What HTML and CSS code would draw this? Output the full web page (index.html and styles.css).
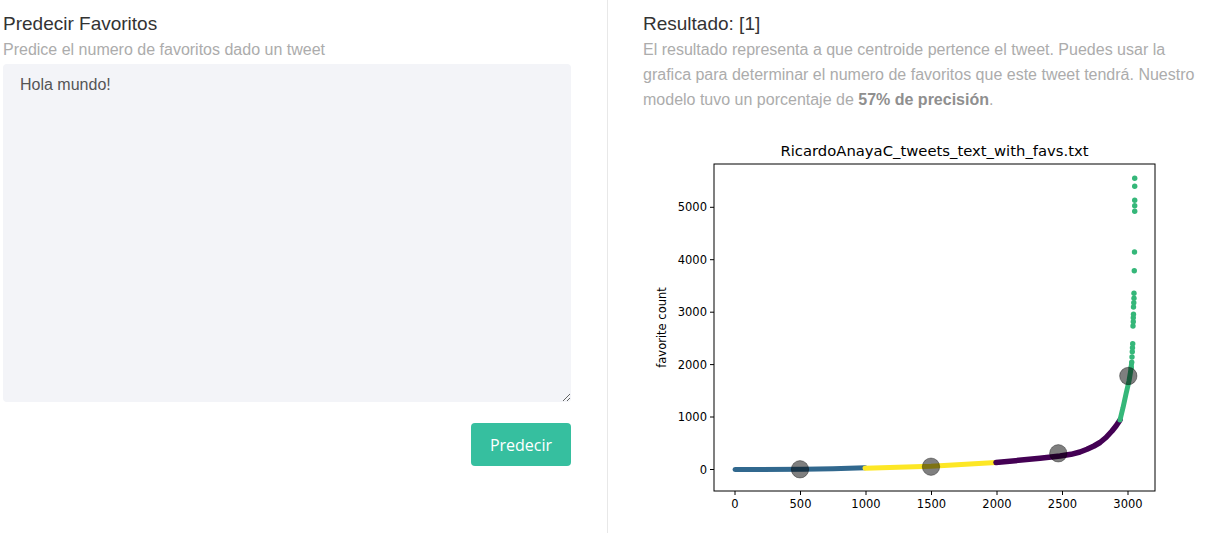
FILE: index.html
```html
<!DOCTYPE html>
<html lang="es">
<head>
<meta charset="utf-8">
<title>Predecir Favoritos</title>
<link rel="stylesheet" href="styles.css">
</head>
<body>
<div class="page">
  <section class="col col-left">
    <h2 class="title">Predecir Favoritos</h2>
    <p class="subtitle">Predice el numero de favoritos dado un tweet</p>
    <textarea class="tweet">Hola mundo!</textarea>
    <div class="actions">
      <button class="btn">Predecir</button>
    </div>
  </section>
  <section class="col col-right">
    <h2 class="title">Resultado: [1]</h2>
    <p class="desc">El resultado representa a que centroide pertence el tweet. Puedes usar la grafica para determinar el numero de favoritos que este tweet tendrá. Nuestro modelo tuvo un porcentaje de <strong>57% de precisión</strong>.</p>
    <svg class="chart" width="560" height="400" viewBox="0 0 560 400" xmlns="http://www.w3.org/2000/svg">
      <text class="ch-title" x="291.5" y="30" text-anchor="middle">RicardoAnayaC_tweets_text_with_favs.txt</text>
      <!-- series -->
      <g fill="none" stroke-width="5" stroke-linecap="round" stroke-linejoin="round">
        <polyline stroke="#31688e" points="92,343.5 160,343.3 190,342.8 222,341.7"/>
        <polyline stroke="#fde725" points="222,342.2 288,340.3 353,336.5"/>
        <polyline stroke="#440154" stroke-width="5.5" points="353,336.5 397,332.3 417,330 428,328.3 437,326 444,323.3 451,320 457,316.5 463,311.5 469,305 473,300 477,294"/>
        <polyline stroke="#35b779" points="477,294 480,281.7 483,268 486,255 487.5,246 488.5,238"/>
      </g>
      <g fill="#35b779">
        <circle cx="491.7" cy="52.3" r="2.7"/>
        <circle cx="491.7" cy="60.3" r="2.7"/>
        <circle cx="491.7" cy="74.3" r="2.7"/>
        <circle cx="491.7" cy="79.7" r="2.7"/>
        <circle cx="491.7" cy="85.3" r="2.7"/>
        <circle cx="491.5" cy="126" r="2.7"/>
        <circle cx="491.3" cy="144.7" r="2.7"/>
        <circle cx="491" cy="167.3" r="2.7"/>
        <circle cx="491" cy="172.3" r="2.7"/>
        <circle cx="490.8" cy="176.7" r="2.7"/>
        <circle cx="490.5" cy="181" r="2.7"/>
        <circle cx="490.5" cy="188.3" r="2.7"/>
        <circle cx="490.3" cy="191.7" r="2.7"/>
        <circle cx="490.3" cy="195.7" r="2.7"/>
        <circle cx="490" cy="200" r="2.7"/>
        <circle cx="489.7" cy="217.7" r="2.7"/>
        <circle cx="489.5" cy="221.7" r="2.7"/>
        <circle cx="489.3" cy="225.7" r="2.7"/>
        <circle cx="489" cy="231" r="2.7"/>
        <circle cx="488.7" cy="236.3" r="2.7"/>
        <circle cx="488.3" cy="241.7" r="2.7"/>
      </g>
      <!-- centroids -->
      <g fill="#000" fill-opacity="0.5" stroke="#000" stroke-opacity="0.35" stroke-width="1">
        <circle cx="157" cy="343.3" r="8.7"/>
        <circle cx="288" cy="340.7" r="8.7"/>
        <circle cx="415.3" cy="327.3" r="8.7"/>
        <circle cx="485.3" cy="250" r="8.7"/>
      </g>
      <!-- axes -->
      <rect x="71" y="38" width="441" height="327" fill="none" stroke="#000" stroke-width="1"/>
      <g stroke="#000" stroke-width="1">
        <line x1="67" y1="343.5" x2="71" y2="343.5"/>
        <line x1="67" y1="291" x2="71" y2="291"/>
        <line x1="67" y1="238.6" x2="71" y2="238.6"/>
        <line x1="67" y1="186.2" x2="71" y2="186.2"/>
        <line x1="67" y1="133.7" x2="71" y2="133.7"/>
        <line x1="67" y1="81.3" x2="71" y2="81.3"/>
        <line x1="92" y1="365" x2="92" y2="369"/>
        <line x1="157.5" y1="365" x2="157.5" y2="369"/>
        <line x1="223" y1="365" x2="223" y2="369"/>
        <line x1="288.5" y1="365" x2="288.5" y2="369"/>
        <line x1="354" y1="365" x2="354" y2="369"/>
        <line x1="419.5" y1="365" x2="419.5" y2="369"/>
        <line x1="485" y1="365" x2="485" y2="369"/>
      </g>
      <g class="tick" text-anchor="end">
        <text x="64" y="347.6">0</text>
        <text x="64" y="295.1">1000</text>
        <text x="64" y="242.7">2000</text>
        <text x="64" y="190.3">3000</text>
        <text x="64" y="137.8">4000</text>
        <text x="64" y="85.4">5000</text>
      </g>
      <g class="tick" text-anchor="middle">
        <text x="92" y="381.5">0</text>
        <text x="157.5" y="381.5">500</text>
        <text x="223" y="381.5">1000</text>
        <text x="288.5" y="381.5">1500</text>
        <text x="354" y="381.5">2000</text>
        <text x="419.5" y="381.5">2500</text>
        <text x="485" y="381.5">3000</text>
      </g>
      <text class="tick" transform="translate(23,201.5) rotate(-90)" text-anchor="middle">favorite count</text>
    </svg>
  </section>
</div>
</body>
</html>
```

FILE: styles.css
```css
html, body {
  margin: 0;
  padding: 0;
  background: #fff;
}
body {
  font-family: "Liberation Sans", Arial, sans-serif;
  overflow: hidden;
}
.page {
  display: flex;
  min-height: 533px;
}
.col {
  box-sizing: border-box;
}
.col-left {
  width: 608px;
  padding: 0 36px 0 3px;
  border-right: 1px solid #e8e8e8;
}
.col-right {
  flex: 1;
  padding: 0 10px 0 35px;
}
.title {
  margin: 12px 0 0;
  font-size: 19px;
  line-height: 24px;
  font-weight: normal;
  color: #333;
}
.subtitle {
  margin: 2px 0 0;
  font-size: 16px;
  line-height: 24px;
  color: #acacac;
}
.tweet {
  display: block;
  box-sizing: border-box;
  width: 100%;
  height: 338px;
  margin: 2px 0 0;
  padding: 12px 17px;
  border: none;
  border-radius: 4px;
  background: #f3f4f8;
  font-family: "Liberation Sans", Arial, sans-serif;
  font-size: 16px;
  line-height: 18px;
  color: #555;
  outline: none;
}
.actions {
  display: flex;
  justify-content: flex-end;
  margin-top: 21px;
}
.btn {
  width: 100px;
  height: 43px;
  border: none;
  border-radius: 4px;
  background: #36bf9f;
  color: #fff;
  font-family: "Open Sans", "Liberation Sans", sans-serif;
  font-size: 16px;
  cursor: pointer;
}
.desc {
  margin: 1px 0 0;
  font-size: 16px;
  line-height: 25px;
  color: #acacac;
}
.desc strong {
  color: #8f8f8f;
}
.chart {
  display: block;
  margin-top: 14px;
}
.ch-title {
  font-family: "DejaVu Sans", sans-serif;
  font-size: 14.8px;
  fill: #000;
}
.tick {
  font-family: "DejaVu Sans", sans-serif;
  font-size: 11.5px;
  fill: #000;
}
```
